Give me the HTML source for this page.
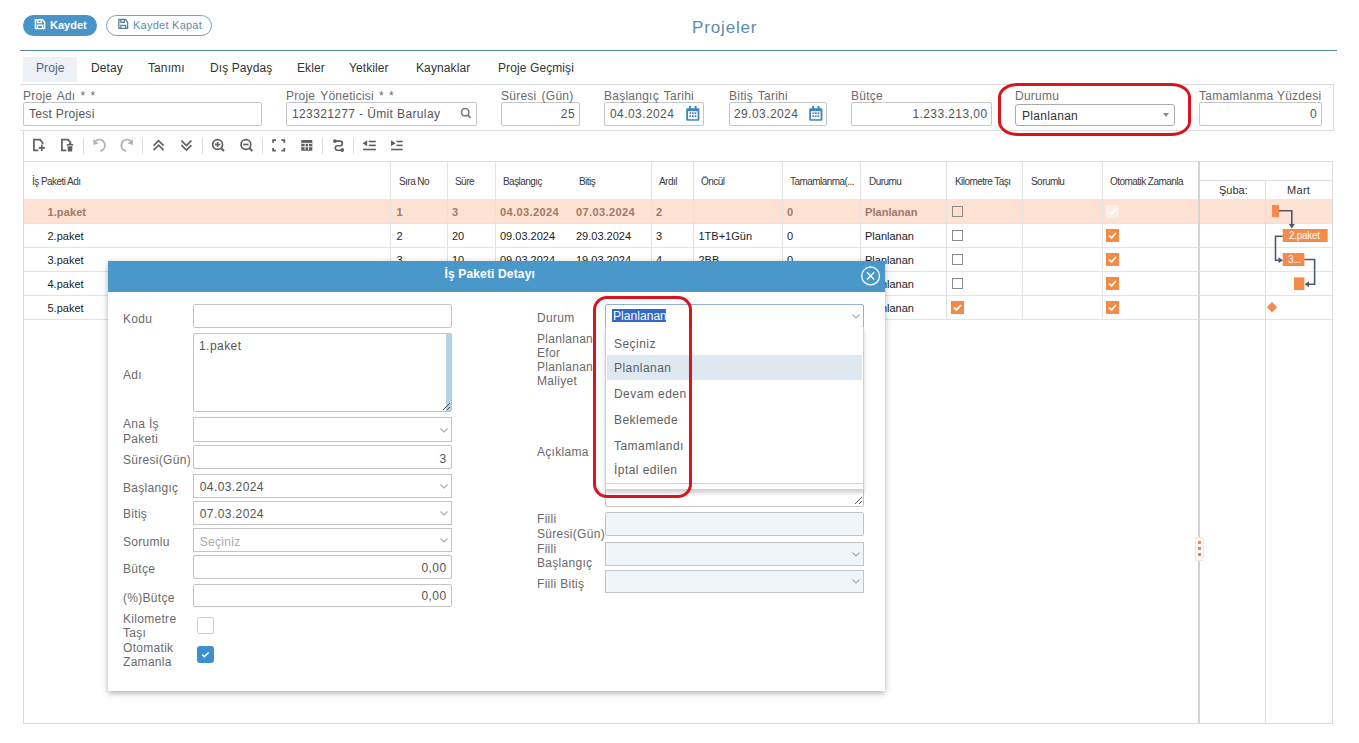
<!DOCTYPE html>
<html><head><meta charset="utf-8">
<style>
*{box-sizing:border-box;margin:0;padding:0}
html,body{width:1359px;height:743px;overflow:hidden;background:#fff;font-family:"Liberation Sans",sans-serif;color:#333;position:relative}
.a{position:absolute}
.t{position:absolute;white-space:nowrap;line-height:1}
.btn{position:absolute;border-radius:11px;height:21px}
.inp{position:absolute;border:1px solid #c6c6c6;border-radius:2px;background:#fff}
.lbl{position:absolute;z-index:2;white-space:nowrap;line-height:1;font-size:12px;color:#6b6b6b;letter-spacing:0.25px;word-spacing:1.5px}
.tab{position:absolute;white-space:nowrap;line-height:1;font-size:12px;color:#333;letter-spacing:0.1px;top:62px}
.vl{position:absolute;width:1px;background:#e2e2e2}
.hl{position:absolute;height:1px;background:#e2e2e2}
.gh{position:absolute;white-space:nowrap;line-height:1;font-size:10px;color:#3a3a3a;letter-spacing:-0.55px;top:176.6px}
.gc{position:absolute;white-space:nowrap;line-height:1;font-size:11px;color:#1c1c1c;letter-spacing:0px}
.b1{font-weight:bold;color:#9f7a68;letter-spacing:0.4px}
.cb{position:absolute;width:11px;height:11px;border:1px solid #8a8a8a;background:transparent}
.ocb{position:absolute;width:13px;height:13px;background:#f58a45}
.ml{position:absolute;white-space:nowrap;line-height:1;font-size:12px;color:#6b6b6b;letter-spacing:0.3px}
.mi{position:absolute;border:1px solid #c2c2c2;border-radius:2px;background:#fff;left:193px;width:259px;height:23px}
.mv{position:absolute;white-space:nowrap;line-height:1;font-size:12px;color:#555;letter-spacing:0.45px}
</style></head>
<body>
<!-- top buttons -->
<div class="btn" style="left:23px;top:15px;width:74px;background:#4a93c6"></div>
<div class="t" style="left:50px;top:20px;font-size:11px;font-weight:bold;color:#fff;letter-spacing:0px">Kaydet</div>
<div class="btn" style="left:106px;top:15px;width:106px;border:1px solid #7d9db2;background:#fff"></div>
<div class="t" style="left:133px;top:20px;font-size:11px;color:#5a8db0;letter-spacing:0.25px">Kaydet Kapat</div>
<div class="t" style="left:692px;top:19px;font-size:17px;color:#5c8bb0;letter-spacing:0.85px">Projeler</div>
<div class="a" style="left:20px;top:50px;width:1317px;height:1px;background:#4f8b93"></div>

<!-- tabs -->
<div class="a" style="left:23px;top:57px;width:54px;height:25px;background:#eef2f7"></div>
<div class="tab" style="left:36px;color:#4f6380">Proje</div>
<div class="tab" style="left:91px">Detay</div>
<div class="tab" style="left:148px">Tanımı</div>
<div class="tab" style="left:210px">Dış Paydaş</div>
<div class="tab" style="left:297px">Ekler</div>
<div class="tab" style="left:349px">Yetkiler</div>
<div class="tab" style="left:416px">Kaynaklar</div>
<div class="tab" style="left:498px">Proje Geçmişi</div>
<div class="a" style="left:20px;top:84px;width:1314px;height:1px;background:#dcdcdc"></div>

<!-- form row -->
<div class="a" style="left:1333px;top:84px;width:1px;height:47px;background:#dcdcdc"></div>
<div class="a" style="left:20px;top:130px;width:1314px;height:1px;background:#dcdcdc"></div>

<div class="lbl" style="left:23px;top:90px">Proje Adı * *</div>
<div class="inp" style="left:23px;top:102px;width:239px;height:24px"></div>
<div class="mv" style="left:29px;top:108px;color:#555;letter-spacing:0.3px">Test Projesi</div>

<div class="lbl" style="left:286px;top:90px">Proje Yöneticisi * *</div>
<div class="inp" style="left:286px;top:102px;width:191px;height:24px"></div>
<div class="mv" style="left:292px;top:108px;letter-spacing:0.37px">123321277 - Ümit Barulay</div>

<div class="lbl" style="left:501px;top:90px">Süresi (Gün)</div>
<div class="inp" style="left:501px;top:102px;width:79px;height:24px"></div>
<div class="mv" style="right:784px;top:108px;letter-spacing:0.4px">25</div>

<div class="lbl" style="left:604px;top:90px">Başlangıç Tarihi</div>
<div class="inp" style="left:604px;top:102px;width:100px;height:24px"></div>
<div class="mv" style="left:610px;top:108px;letter-spacing:0.42px">04.03.2024</div>

<div class="lbl" style="left:729px;top:90px">Bitiş Tarihi</div>
<div class="inp" style="left:729px;top:102px;width:98px;height:24px"></div>
<div class="mv" style="left:734px;top:108px;letter-spacing:0.42px">29.03.2024</div>

<div class="lbl" style="left:851px;top:90px">Bütçe</div>
<div class="inp" style="left:851px;top:102px;width:141px;height:24px"></div>
<div class="mv" style="right:371.5px;top:108px;letter-spacing:0.42px">1.233.213,00</div>

<div class="lbl" style="left:1015px;top:90px">Durumu</div>
<div class="inp" style="left:1015px;top:104px;width:160px;height:22px;border-radius:3px;border-color:#aaa"></div>
<div class="mv" style="left:1022px;top:109.5px;color:#333;letter-spacing:0.3px">Planlanan</div>

<div class="lbl" style="left:1199px;top:90px;word-spacing:0">Tamamlanma Yüzdesi</div>
<div class="inp" style="left:1199px;top:102px;width:123px;height:24px"></div>
<div class="mv" style="right:42px;top:108px">0</div>

<!-- ICONS -->
<svg class="a" style="left:33px;top:17px" width="16" height="16" viewBox="33 17 16 16"><g fill="none" stroke="#fff" stroke-width="1.4"><path d="M35.4 19.7H42.3L44.6 22V28.6H35.4Z"/><path d="M37.6 19.7V22.6H41.2V19.7"/><path d="M37.4 28.6V25.3H42.6V28.6"/></g></svg>
<svg class="a" style="left:116px;top:17px" width="16" height="16" viewBox="116 17 16 16"><g fill="none" stroke="#5b8196" stroke-width="1.3"><path d="M118.9 19.5H125.6L127.6 22.3V28.4H118.9Z"/><path d="M120.9 19.5V22.3H124.3V19.5"/><path d="M120.9 28.4V25.4H125.6V28.4"/></g></svg>
<svg class="a" style="left:459px;top:106px" width="14" height="14" viewBox="459 106 14 14"><g fill="none" stroke="#7a7a7a" stroke-width="1.6"><circle cx="465.2" cy="112.2" r="3.7"/><path d="M467.9 115L470.4 117.8" stroke-width="1.8"/></g></svg>
<svg class="a" style="left:685px;top:105px" width="16" height="17" viewBox="685 105 16 17"><g fill="#3f86bd"><rect x="686.2" y="108.3" width="13.2" height="12.5" rx="1.3"/><rect x="689" y="106" width="2" height="3.5"/><rect x="694.6" y="106" width="2" height="3.5"/></g><rect x="688" y="111.2" width="9.6" height="8" fill="#fff"/><g fill="#3f86bd"><rect x="689.5" y="112.3" width="1.7" height="1.7"/><rect x="692" y="112.3" width="1.7" height="1.7"/><rect x="694.6" y="112.3" width="1.7" height="1.7"/><rect x="689.5" y="115.3" width="1.7" height="1.7"/><rect x="692" y="115.3" width="1.7" height="1.7"/><rect x="694.6" y="115.3" width="1.7" height="1.7"/></g></svg>
<svg class="a" style="left:808px;top:105px" width="16" height="17" viewBox="685 105 16 17"><g fill="#3f86bd"><rect x="686.2" y="108.3" width="13.2" height="12.5" rx="1.3"/><rect x="689" y="106" width="2" height="3.5"/><rect x="694.6" y="106" width="2" height="3.5"/></g><rect x="688" y="111.2" width="9.6" height="8" fill="#fff"/><g fill="#3f86bd"><rect x="689.5" y="112.3" width="1.7" height="1.7"/><rect x="692" y="112.3" width="1.7" height="1.7"/><rect x="694.6" y="112.3" width="1.7" height="1.7"/><rect x="689.5" y="115.3" width="1.7" height="1.7"/><rect x="692" y="115.3" width="1.7" height="1.7"/><rect x="694.6" y="115.3" width="1.7" height="1.7"/></g></svg>
<svg class="a" style="left:1160px;top:111px" width="12" height="8"><path d="M3 2H9L6 6Z" fill="#8a8a8a"/></svg>
<!-- /ICONS -->
<!-- red highlight 1 -->
<div class="a" style="left:998px;top:83px;width:193px;height:53px;border:3px solid #d8141f;border-radius:20px / 14px"></div>

<!-- gantt box -->
<div class="a" style="left:23px;top:130px;width:1px;height:594px;background:#dcdcdc"></div><div class="a" style="left:1332px;top:161px;width:1px;height:563px;background:#dcdcdc"></div><div class="a" style="left:23px;top:723px;width:1310px;height:1px;background:#dcdcdc"></div>
<div class="a" style="left:23px;top:161px;width:1310px;height:1px;background:#dcdcdc"></div>

<!-- GRID START -->
<div class="vl" style="left:83px;top:138px;height:16px;background:#dadada"></div>
<div class="vl" style="left:142px;top:138px;height:16px;background:#dadada"></div>
<div class="vl" style="left:202px;top:138px;height:16px;background:#dadada"></div>
<div class="vl" style="left:262px;top:138px;height:16px;background:#dadada"></div>
<div class="vl" style="left:322px;top:138px;height:16px;background:#dadada"></div>
<div class="vl" style="left:353px;top:138px;height:16px;background:#dadada"></div>
<svg class="a" style="left:0;top:130px" width="420" height="31" viewBox="0 130 420 31">
<g fill="none" stroke="#606060" stroke-width="1.7">
 <path d="M38.3 150.4H33.9V139.6H40L42.5 142.5V144.2"/>
 <path d="M41.8 144.8V151M38.7 147.9H44.9"/>
 <path d="M66.3 150.4H61.9V139.6H68L70.5 142.5V143.4"/>
</g>
<g fill="#606060"><rect x="66.8" y="144" width="6.4" height="1.5"/><rect x="68.9" y="142.9" width="2.2" height="1.4"/><path d="M67.5 146.3H72.5L72.1 151.6H67.9Z"/></g>
<g fill="none" stroke="#b3b3b3" stroke-width="1.8">
 <path d="M95.2 141.4A5.7 5.7 0 1 1 100.2 151"/>
 <path d="M131 141.4A5.7 5.7 0 1 0 126 151"/>
</g>
<g fill="#b3b3b3"><path d="M93.2 139L93.4 145L98.6 143.4Z"/><path d="M133 139L132.8 145L127.6 143.4Z"/></g>
<g fill="none" stroke="#606060" stroke-width="1.7">
 <path d="M153.6 145.6L158.6 140.7L163.6 145.6M153.6 150.1L158.6 145.2L163.6 150.1"/>
 <path d="M181.4 140.6L186.4 145.5L191.4 140.6M181.4 145.1L186.4 150L191.4 145.1"/>
 <circle cx="217.6" cy="144.5" r="4.9"/><path d="M221.1 148L224 151" stroke-width="2"/><path d="M215 144.5H220.2M217.6 141.9V147.1"/>
 <circle cx="245.9" cy="144.5" r="4.9"/><path d="M249.4 148L252.3 151" stroke-width="2"/><path d="M243.3 144.5H248.5"/>
 <path d="M273.1 142.8V140.1H276M281.4 140.1H284.3V142.8M284.3 147.9V150.6H281.4M276 150.6H273.1V147.9" stroke-width="1.8"/>
 <path d="M335.5 141.1H340A2.35 2.35 0 0 1 340 145.8H337.5A2.2 2.2 0 0 0 337.5 150.2H341.5" stroke-width="1.6"/>
</g>
<g fill="#606060">
 <circle cx="334.9" cy="141.1" r="1.9"/><circle cx="342.2" cy="150" r="1.9"/>
 <rect x="301.2" y="140" width="11.1" height="10.7" rx="0.8"/>
</g>
<g fill="#fff"><rect x="301.2" y="142.9" width="11.1" height="0.9"/><rect x="301.2" y="146.3" width="11.1" height="0.9"/><rect x="304.6" y="142.9" width="0.9" height="7"/><rect x="308.1" y="142.9" width="0.9" height="7"/></g>
<g fill="#606060">
 <path d="M362.6 143.2L367.2 140.2V146.2Z"/><rect x="368.8" y="140.7" width="7" height="1.6"/><rect x="368.8" y="144.6" width="7" height="1.6"/><rect x="363" y="148.7" width="12.8" height="1.6"/>
 <path d="M395.6 143.2L391 140.2V146.2Z"/><rect x="396.4" y="140.7" width="6.3" height="1.6"/><rect x="396.4" y="144.6" width="6.3" height="1.6"/><rect x="391" y="148.7" width="11.7" height="1.6"/>
</g>
</svg>
<div class="hl" style="left:24px;top:199px;width:1174px;background:#f0d8cc"></div>
<div class="hl" style="left:24px;top:223px;width:1308px;background:#e3e3e3"></div>
<div class="hl" style="left:24px;top:247px;width:1308px;background:#e3e3e3"></div>
<div class="hl" style="left:24px;top:271px;width:1308px;background:#e3e3e3"></div>
<div class="hl" style="left:24px;top:295px;width:1308px;background:#e3e3e3"></div>
<div class="hl" style="left:24px;top:319px;width:1308px;background:#e3e3e3"></div>
<div class="a" style="left:24px;top:199px;width:1308px;height:24px;background:#fde1d3"></div>
<div class="vl" style="left:390px;top:162px;height:157px;background:#e3e3e3"></div>
<div class="vl" style="left:447px;top:162px;height:157px;background:#e3e3e3"></div>
<div class="vl" style="left:495px;top:162px;height:157px;background:#e3e3e3"></div>
<div class="vl" style="left:651px;top:162px;height:157px;background:#e3e3e3"></div>
<div class="vl" style="left:693px;top:162px;height:157px;background:#e3e3e3"></div>
<div class="vl" style="left:782px;top:162px;height:157px;background:#e3e3e3"></div>
<div class="vl" style="left:860px;top:162px;height:157px;background:#e3e3e3"></div>
<div class="vl" style="left:946px;top:162px;height:157px;background:#e3e3e3"></div>
<div class="vl" style="left:1022px;top:162px;height:157px;background:#e3e3e3"></div>
<div class="vl" style="left:1102px;top:162px;height:157px;background:#e3e3e3"></div>
<div class="a" style="left:1198px;top:162px;width:2px;height:561px;background:#d4d4d4"></div>
<div class="gh" style="left:32px">İş Paketi Adı</div>
<div class="gh" style="left:399px">Sıra No</div>
<div class="gh" style="left:455px">Süre</div>
<div class="gh" style="left:503px">Başlangıç</div>
<div class="gh" style="left:579px">Bitiş</div>
<div class="gh" style="left:659px">Ardıl</div>
<div class="gh" style="left:701px">Öncül</div>
<div class="gh" style="left:790px">Tamamlanma(...</div>
<div class="gh" style="left:869px">Durumu</div>
<div class="gh" style="left:955px">Kilometre Taşı</div>
<div class="gh" style="left:1031px">Sorumlu</div>
<div class="gh" style="left:1110px">Otomatik Zamanla</div>
<div class="gc b1" style="left:47.5px;top:207.0px;letter-spacing:0.1px">1.paket</div>
<div class="gc b1" style="left:396.5px;top:207.0px">1</div>
<div class="gc b1" style="left:452px;top:207.0px">3</div>
<div class="gc b1" style="left:500px;top:207.0px">04.03.2024</div>
<div class="gc b1" style="left:576px;top:207.0px">07.03.2024</div>
<div class="gc b1" style="left:656px;top:207.0px">2</div>
<div class="gc b1" style="left:787px;top:207.0px">0</div>
<div class="gc b1" style="left:865px;top:207.0px;letter-spacing:0.05px">Planlanan</div>
<div class="cb" style="left:952px;top:206.0px"></div>
<div class="ocb" style="left:1106px;top:205.0px;background:#fbeee6"><svg width="13" height="13" style="display:block"><path d="M3 6.5L5.5 9L10 4" fill="none" stroke="#fff" stroke-width="1.8"/></svg></div>
<div class="gc" style="left:47.5px;top:231.0px">2.paket</div>
<div class="gc" style="left:396.5px;top:231.0px">2</div>
<div class="gc" style="left:452px;top:231.0px">20</div>
<div class="gc" style="left:500px;top:231.0px">09.03.2024</div>
<div class="gc" style="left:576px;top:231.0px">29.03.2024</div>
<div class="gc" style="left:656px;top:231.0px">3</div>
<div class="gc" style="left:698.5px;top:231.0px">1TB+1Gün</div>
<div class="gc" style="left:787px;top:231.0px">0</div>
<div class="gc" style="left:865px;top:231.0px">Planlanan</div>
<div class="cb" style="left:952px;top:230.0px"></div>
<div class="ocb" style="left:1106px;top:229.0px"><svg width="13" height="13" style="display:block"><path d="M3 6.5L5.5 9L10 4" fill="none" stroke="#fff" stroke-width="1.8"/></svg></div>
<div class="gc" style="left:47.5px;top:255.0px">3.paket</div>
<div class="gc" style="left:396.5px;top:255.0px">3</div>
<div class="gc" style="left:452px;top:255.0px">10</div>
<div class="gc" style="left:500px;top:255.0px">09.03.2024</div>
<div class="gc" style="left:576px;top:255.0px">19.03.2024</div>
<div class="gc" style="left:656px;top:255.0px">4</div>
<div class="gc" style="left:698.5px;top:255.0px">2BB</div>
<div class="gc" style="left:787px;top:255.0px">0</div>
<div class="gc" style="left:865px;top:255.0px">Planlanan</div>
<div class="cb" style="left:952px;top:254.0px"></div>
<div class="ocb" style="left:1106px;top:253.0px"><svg width="13" height="13" style="display:block"><path d="M3 6.5L5.5 9L10 4" fill="none" stroke="#fff" stroke-width="1.8"/></svg></div>
<div class="gc" style="left:47.5px;top:279.0px">4.paket</div>
<div class="gc" style="left:396.5px;top:279.0px">4</div>
<div class="gc" style="left:452px;top:279.0px">5</div>
<div class="gc" style="left:500px;top:279.0px">20.03.2024</div>
<div class="gc" style="left:576px;top:279.0px">25.03.2024</div>
<div class="gc" style="left:698.5px;top:279.0px">3BB</div>
<div class="gc" style="left:787px;top:279.0px">0</div>
<div class="gc" style="left:865px;top:279.0px">Planlanan</div>
<div class="cb" style="left:952px;top:278.0px"></div>
<div class="ocb" style="left:1106px;top:277.0px"><svg width="13" height="13" style="display:block"><path d="M3 6.5L5.5 9L10 4" fill="none" stroke="#fff" stroke-width="1.8"/></svg></div>
<div class="gc" style="left:47.5px;top:303.0px">5.paket</div>
<div class="gc" style="left:396.5px;top:303.0px">5</div>
<div class="gc" style="left:452px;top:303.0px">0</div>
<div class="gc" style="left:500px;top:303.0px">29.03.2024</div>
<div class="gc" style="left:576px;top:303.0px">29.03.2024</div>
<div class="gc" style="left:787px;top:303.0px">0</div>
<div class="gc" style="left:865px;top:303.0px">Planlanan</div>
<div class="ocb" style="left:951px;top:301.0px"><svg width="13" height="13" style="display:block"><path d="M3 6.5L5.5 9L10 4" fill="none" stroke="#fff" stroke-width="1.8"/></svg></div>
<div class="ocb" style="left:1106px;top:301.0px"><svg width="13" height="13" style="display:block"><path d="M3 6.5L5.5 9L10 4" fill="none" stroke="#fff" stroke-width="1.8"/></svg></div>
<div class="hl" style="left:1200px;top:180px;width:132px;background:#e0e0e0"></div>

<div class="vl" style="left:1265px;top:180px;height:543px;background:#e0e0e0"></div>
<div class="t" style="left:1219px;top:184.5px;font-size:11px;color:#333;letter-spacing:0px">Şuba:</div>
<div class="t" style="left:1287px;top:184.5px;font-size:11px;color:#333;letter-spacing:0.3px">Mart</div>
<svg class="a" style="left:1199px;top:199px" width="134" height="130" viewBox="1199 199 134 130">
<g fill="#f58a4d">
 <rect x="1272" y="205" width="7" height="12.2"/>
 <rect x="1282.7" y="229" width="45" height="13"/>
 <rect x="1282.7" y="253" width="21.7" height="13"/>
 <rect x="1294" y="277.4" width="10.4" height="12.6"/>
 <path d="M1272 302L1277.2 307.2L1272 312.4L1266.8 307.2Z"/>
</g>
<g fill="none" stroke="#4d5868" stroke-width="1.6">
 <path d="M1279 210.8H1291.8V225"/>
 <path d="M1282.7 236.3H1275.5V260.3H1279"/>
 <path d="M1304.4 259.5H1314.6V284.3H1308"/>
</g>
<g fill="#4d5868">
 <path d="M1288.8 224L1294.8 224L1291.8 228.5Z"/>
 <path d="M1278.5 257.3L1278.5 263.3L1283 260.3Z"/>
 <path d="M1309 281.3L1309 287.3L1304.6 284.3Z"/>
</g>
<g font-family="Liberation Sans" font-size="10" fill="#fff" letter-spacing="-0.3">
 <text x="1289" y="239">2.paket</text>
 <text x="1288" y="263">3...</text>
</g>
</svg>
<div class="a" style="left:1195px;top:537px;width:9px;height:24px;background:#fffaf5;border:1px solid #e8e8e8;border-radius:2px"></div>
<div class="a" style="left:1198px;top:541px;width:3px;height:3px;background:#dc8a63"></div><div class="a" style="left:1198px;top:547px;width:3px;height:3px;background:#dc8a63"></div><div class="a" style="left:1198px;top:553px;width:3px;height:3px;background:#d28a6a"></div>
<!-- GRID END -->
<!-- modal -->
<div id="modal" class="a" style="left:108px;top:261px;width:777px;height:430px;background:#fff;box-shadow:0 2px 6px rgba(0,0,0,0.32)">
  <div class="a" style="left:0;top:0;width:777px;height:31px;background:#4a98c9"></div>
</div>
<!-- MODAL CONTENT START -->
<div class="t" style="left:444.5px;top:268.2px;font-size:12px;color:#fff;letter-spacing:0.15px;font-weight:bold;">İş Paketi Detayı</div>
<svg class="a" style="left:859px;top:265px" width="23" height="22" viewBox="859 265 23 22"><circle cx="870.6" cy="275.9" r="8.9" fill="none" stroke="#fff" stroke-width="1.3"/><path d="M867 272.3L874.2 279.5M874.2 272.3L867 279.5" stroke="#fff" stroke-width="1.3"/></svg>
<div class="inp" style="left:193px;top:304px;width:259px;height:24px;border-color:#c4c4c4"></div>
<div class="t" style="left:123px;top:313.3px;font-size:12px;color:#6a6a6a;letter-spacing:0.3px;font-weight:normal;">Kodu</div>
<div class="inp" style="left:193px;top:333px;width:259px;height:79px;border-color:#c4c4c4"></div>
<div class="a" style="left:446px;top:334px;width:5px;height:77px;background:#b5d3e6"></div>
<svg class="a" style="left:441px;top:401px" width="10" height="10"><path d="M9 2L2 9M9 6L6 9" stroke="#555" stroke-width="1"/></svg>
<div class="t" style="left:123px;top:368.7px;font-size:12px;color:#6a6a6a;letter-spacing:0.3px;font-weight:normal;">Adı</div>
<div class="inp" style="border-radius:0;left:193px;top:417px;width:259px;height:25px;border-color:#c4c4c4"></div>
<svg class="a" style="left:438.5px;top:426.5px" width="10" height="7"><path d="M1.5 1.5L5 5L8.5 1.5" fill="none" stroke="#aaa" stroke-width="1.1"/></svg>
<div class="t" style="left:123px;top:418.3px;font-size:12px;color:#6a6a6a;letter-spacing:0.3px;font-weight:normal;">Ana İş</div>
<div class="t" style="left:123px;top:433.3px;font-size:12px;color:#6a6a6a;letter-spacing:0.3px;font-weight:normal;">Paketi</div>
<div class="inp" style="left:193px;top:445px;width:259px;height:24px;border-color:#c4c4c4"></div>
<div class="t" style="left:123px;top:454.3px;font-size:12px;color:#6a6a6a;letter-spacing:0.3px;font-weight:normal;">Süresi(Gün)</div>
<div class="inp" style="border-radius:0;left:193px;top:474px;width:259px;height:24px;border-color:#c4c4c4"></div>
<svg class="a" style="left:438.5px;top:482.5px" width="10" height="7"><path d="M1.5 1.5L5 5L8.5 1.5" fill="none" stroke="#aaa" stroke-width="1.1"/></svg>
<div class="t" style="left:123px;top:481.8px;font-size:12px;color:#6a6a6a;letter-spacing:0.3px;font-weight:normal;">Başlangıç</div>
<div class="inp" style="border-radius:0;left:193px;top:501px;width:259px;height:24px;border-color:#c4c4c4"></div>
<svg class="a" style="left:438.5px;top:509.5px" width="10" height="7"><path d="M1.5 1.5L5 5L8.5 1.5" fill="none" stroke="#aaa" stroke-width="1.1"/></svg>
<div class="t" style="left:123px;top:508.3px;font-size:12px;color:#6a6a6a;letter-spacing:0.3px;font-weight:normal;">Bitiş</div>
<div class="inp" style="border-radius:0;left:193px;top:528px;width:259px;height:24px;border-color:#c4c4c4"></div>
<svg class="a" style="left:438.5px;top:537.0px" width="10" height="7"><path d="M1.5 1.5L5 5L8.5 1.5" fill="none" stroke="#aaa" stroke-width="1.1"/></svg>
<div class="t" style="left:123px;top:535.9px;font-size:12px;color:#6a6a6a;letter-spacing:0.3px;font-weight:normal;">Sorumlu</div>
<div class="inp" style="left:193px;top:555px;width:259px;height:24px;border-color:#c4c4c4"></div>
<div class="t" style="left:123px;top:563.3px;font-size:12px;color:#6a6a6a;letter-spacing:0.3px;font-weight:normal;">Bütçe</div>
<div class="inp" style="left:193px;top:584px;width:259px;height:23px;border-color:#c4c4c4"></div>
<div class="t" style="left:123px;top:591.7px;font-size:12px;color:#6a6a6a;letter-spacing:0.3px;font-weight:normal;">(%)Bütçe</div>
<div class="t" style="left:199px;top:339.6px;font-size:12px;color:#555;letter-spacing:0.45px;font-weight:normal;">1.paket</div>
<div class="t" style="right:912.5px;top:452.8px;font-size:12px;color:#555;letter-spacing:0.3px">3</div>
<div class="t" style="left:199.7px;top:481.4px;font-size:12px;color:#555;letter-spacing:0.42px;font-weight:normal;">04.03.2024</div>
<div class="t" style="left:199.7px;top:508.3px;font-size:12px;color:#555;letter-spacing:0.42px;font-weight:normal;">07.03.2024</div>
<div class="t" style="left:199.7px;top:535.8px;font-size:12px;color:#aaa;letter-spacing:0.3px;font-weight:normal;">Seçiniz</div>
<div class="t" style="right:912.5px;top:562px;font-size:12px;color:#555;letter-spacing:0.4px">0,00</div>
<div class="t" style="right:912.5px;top:589.6px;font-size:12px;color:#555;letter-spacing:0.4px">0,00</div>
<div class="t" style="left:123px;top:612.5px;font-size:12px;color:#6a6a6a;letter-spacing:0.3px;font-weight:normal;">Kilometre</div>
<div class="t" style="left:123px;top:627.0px;font-size:12px;color:#6a6a6a;letter-spacing:0.3px;font-weight:normal;">Taşı</div>
<div class="t" style="left:123px;top:642.1px;font-size:12px;color:#6a6a6a;letter-spacing:0.3px;font-weight:normal;">Otomatik</div>
<div class="t" style="left:123px;top:656.0px;font-size:12px;color:#6a6a6a;letter-spacing:0.3px;font-weight:normal;">Zamanla</div>
<div class="a" style="left:197px;top:617px;width:17px;height:17px;border:1px solid #cfcfcf;border-radius:2px;background:#fff"></div>
<div class="a" style="left:197px;top:646px;width:17px;height:17px;border-radius:3px;background:#3e8fcf"><svg width="17" height="17" style="display:block"><path d="M5.2 8.6L7.4 10.6L11.6 6.5" fill="none" stroke="#fff" stroke-width="1.5"/></svg></div>
<div class="t" style="left:537px;top:312.2px;font-size:12px;color:#6a6a6a;letter-spacing:0.3px;font-weight:normal;">Durum</div>
<div class="t" style="left:537px;top:333.0px;font-size:12px;color:#6a6a6a;letter-spacing:0.3px;font-weight:normal;">Planlanan</div>
<div class="t" style="left:537px;top:346.8px;font-size:12px;color:#6a6a6a;letter-spacing:0.3px;font-weight:normal;">Efor</div>
<div class="t" style="left:537px;top:361.0px;font-size:12px;color:#6a6a6a;letter-spacing:0.3px;font-weight:normal;">Planlanan</div>
<div class="t" style="left:537px;top:374.7px;font-size:12px;color:#6a6a6a;letter-spacing:0.3px;font-weight:normal;">Maliyet</div>
<div class="t" style="left:537px;top:445.6px;font-size:12px;color:#6a6a6a;letter-spacing:0.3px;font-weight:normal;">Açıklama</div>
<div class="inp" style="left:605px;top:429px;width:259px;height:78px;border-color:#c4c4c4"></div>
<svg class="a" style="left:853px;top:495px" width="10" height="10"><path d="M9 2L2 9M9 6L6 9" stroke="#555" stroke-width="1"/></svg>
<div class="inp" style="left:605px;top:512px;width:259px;height:24px;border-color:#c4c4c4;background:#eef5fb"></div>
<div class="t" style="left:537px;top:512.7px;font-size:12px;color:#6a6a6a;letter-spacing:0.3px;font-weight:normal;">Fiili</div>
<div class="t" style="left:537px;top:528.3px;font-size:12px;color:#6a6a6a;letter-spacing:0.3px;font-weight:normal;">Süresi(Gün)</div>
<div class="inp" style="border-radius:0;left:605px;top:542px;width:259px;height:24px;border-color:#c4c4c4;background:#eef5fb"></div>
<svg class="a" style="left:850.5px;top:551.0px" width="10" height="7"><path d="M1.5 1.5L5 5L8.5 1.5" fill="none" stroke="#aaa" stroke-width="1.1"/></svg>
<div class="t" style="left:537px;top:542.9px;font-size:12px;color:#6a6a6a;letter-spacing:0.3px;font-weight:normal;">Fiili</div>
<div class="t" style="left:537px;top:557.2px;font-size:12px;color:#6a6a6a;letter-spacing:0.3px;font-weight:normal;">Başlangıç</div>
<div class="inp" style="border-radius:0;left:605px;top:570px;width:259px;height:23px;border-color:#c4c4c4;background:#eef5fb"></div>
<svg class="a" style="left:850.5px;top:578.0px" width="10" height="7"><path d="M1.5 1.5L5 5L8.5 1.5" fill="none" stroke="#aaa" stroke-width="1.1"/></svg>
<div class="t" style="left:537px;top:577.9px;font-size:12px;color:#6a6a6a;letter-spacing:0.3px;font-weight:normal;">Fiili Bitiş</div>
<div class="inp" style="left:605px;top:304px;width:259px;height:24px;border-color:#8fb3d3"></div>
<svg class="a" style="left:850.5px;top:313px" width="10" height="7"><path d="M1.5 1.5L5 5L8.5 1.5" fill="none" stroke="#aaa" stroke-width="1.1"/></svg>
<div class="a" style="left:612px;top:309px;width:54px;height:13px;background:#3267cb"></div>
<div class="t" style="left:613px;top:310.1px;font-size:12px;color:#fff;letter-spacing:0.05px;font-weight:normal;">Planlanan</div>
<div class="a" style="left:605px;top:327px;width:259px;height:163px;background:#fff;border:1px solid #d0d0d0;border-top:none;box-shadow:0 3px 4px rgba(0,0,0,0.18)"></div>
<div class="a" style="left:606px;top:483px;width:257px;height:1px;background:#cfcfcf"></div>
<div class="a" style="left:607px;top:355px;width:255px;height:25px;background:#dde8f1"></div>
<div class="t" style="left:614px;top:338.3px;font-size:12px;color:#5e5e5e;letter-spacing:0.45px;font-weight:normal;">Seçiniz</div>
<div class="t" style="left:614px;top:362.0px;font-size:12px;color:#5e5e5e;letter-spacing:0.45px;font-weight:normal;">Planlanan</div>
<div class="t" style="left:614px;top:387.6px;font-size:12px;color:#5e5e5e;letter-spacing:0.45px;font-weight:normal;">Devam eden</div>
<div class="t" style="left:614px;top:413.6px;font-size:12px;color:#5e5e5e;letter-spacing:0.45px;font-weight:normal;">Beklemede</div>
<div class="t" style="left:614px;top:439.5px;font-size:12px;color:#5e5e5e;letter-spacing:0.45px;font-weight:normal;">Tamamlandı</div>
<div class="t" style="left:614px;top:464.1px;font-size:12px;color:#5e5e5e;letter-spacing:0.45px;font-weight:normal;">İptal edilen</div>
<div class="a" style="left:593px;top:296px;width:99px;height:202px;border:3px solid #d8141f;border-radius:14px"></div>
<!-- MODAL CONTENT END -->
</body></html>
